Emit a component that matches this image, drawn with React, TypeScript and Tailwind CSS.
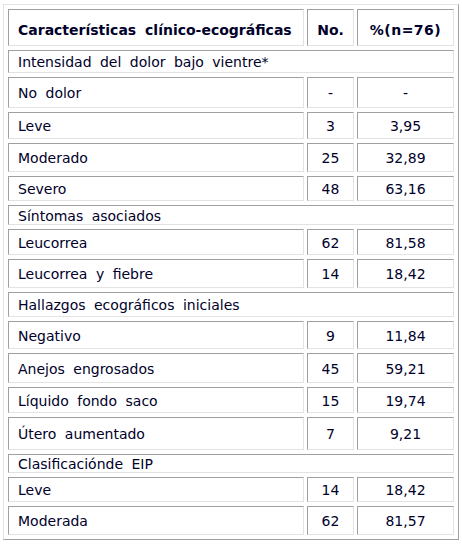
import { FC } from "react";

type Row =
  | { kind: "group"; label: string; h: string }
  | { kind: "data"; label: string; n: string; pct: string; h: string };

const rows: Row[] = [
  { kind: "group", label: "Intensidad del dolor bajo vientre*", h: "h-[23px]" },
  { kind: "data", label: "No dolor", n: "-", pct: "-", h: "h-[31px]" },
  { kind: "data", label: "Leve", n: "3", pct: "3,95", h: "h-[27px]" },
  { kind: "data", label: "Moderado", n: "25", pct: "32,89", h: "h-[29px]" },
  { kind: "data", label: "Severo", n: "48", pct: "63,16", h: "h-[25px]" },
  { kind: "group", label: "Síntomas asociados", h: "h-[20px]" },
  { kind: "data", label: "Leucorrea", n: "62", pct: "81,58", h: "h-[26px]" },
  { kind: "data", label: "Leucorrea y fiebre", n: "14", pct: "18,42", h: "h-[29px]" },
  { kind: "group", label: "Hallazgos ecográficos iniciales", h: "h-[25px]" },
  { kind: "data", label: "Negativo", n: "9", pct: "11,84", h: "h-[28px]" },
  { kind: "data", label: "Anejos engrosados", n: "45", pct: "59,21", h: "h-[30px]" },
  { kind: "data", label: "Líquido fondo saco", n: "15", pct: "19,74", h: "h-[26px]" },
  { kind: "data", label: "Útero aumentado", n: "7", pct: "9,21", h: "h-[33px]" },
  { kind: "group", label: "Clasificaciónde EIP", h: "h-[19px]" },
  { kind: "data", label: "Leve", n: "14", pct: "18,42", h: "h-[25px]" },
  { kind: "data", label: "Moderada", n: "62", pct: "81,57", h: "h-[29px]" },
];

// inset cell border like an old html table
const cell =
  "flex items-center pt-[2px] border border-t-[#a0a0a0] border-l-[#a0a0a0] border-b-[#e3e3e3] border-r-[#e3e3e3] bg-white";

const App: FC = () => {
  return (
    <div className="min-h-[546px] bg-white pl-[3px] pt-[4px] font-['DejaVu_Sans',sans-serif] text-[14px] text-[#00002a] [word-spacing:4px]">
      <div className="w-[456px] border border-t-[#e3e3e3] border-l-[#e3e3e3] border-b-[#a0a0a0] border-r-[#a0a0a0] p-[4px]">
        <div className="flex flex-col gap-[4px]">
          {/* header */}
          <div className="flex gap-[3px] h-[37px] font-bold">
            <div className={`${cell} w-[296px] pl-[9px] !pt-[5px]`}>
              Características clínico-ecográficas
            </div>
            <div className={`${cell} w-[47px] justify-center !pt-[5px]`}>No.</div>
            <div className={`${cell} w-[97px] justify-center !pt-[5px] tracking-[0.5px]`}>
              %(n=76)
            </div>
          </div>
          {rows.map((r, i) =>
            r.kind === "group" ? (
              <div key={i} className={`${cell} ${r.h} w-[446px] pl-[9px]`}>
                {r.label}
              </div>
            ) : (
              <div key={i} className={`flex gap-[3px] ${r.h}`}>
                <div className={`${cell} w-[296px] pl-[9px]`}>{r.label}</div>
                <div className={`${cell} w-[47px] justify-center`}>{r.n}</div>
                <div className={`${cell} w-[97px] justify-center`}>{r.pct}</div>
              </div>
            )
          )}
        </div>
      </div>
    </div>
  );
};

export default App;
